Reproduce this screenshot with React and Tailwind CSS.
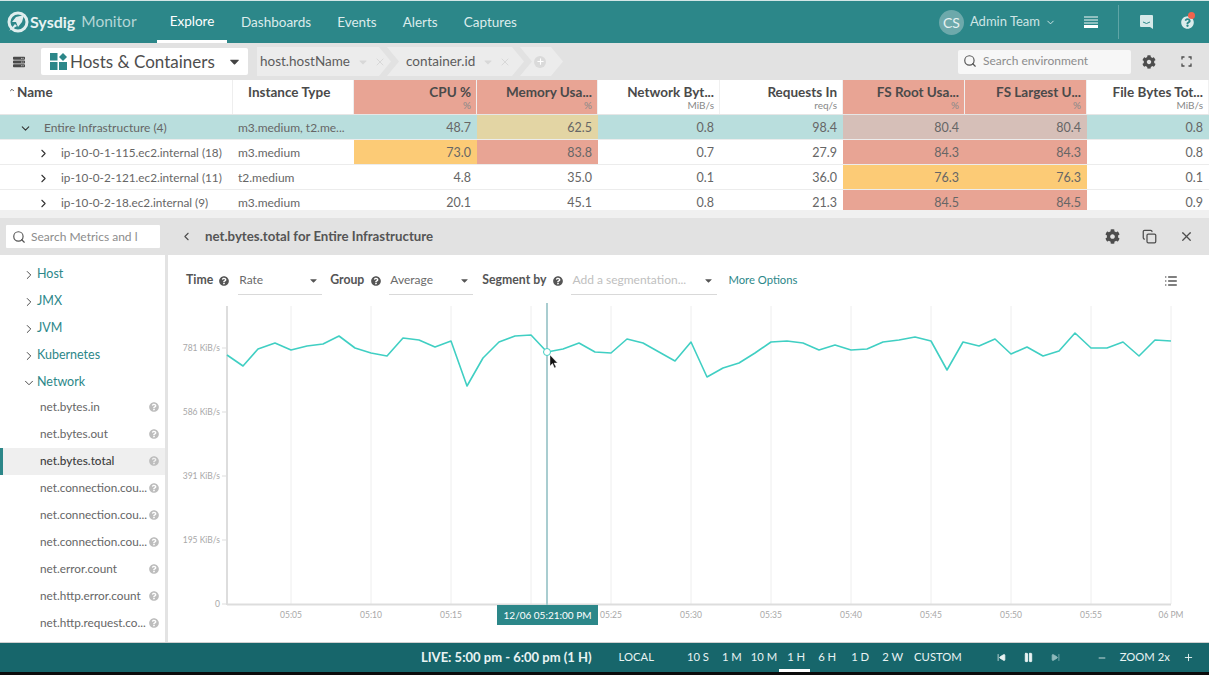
import React from "react";
import { Search, ChevronDown, ChevronRight, ChevronLeft, ChevronUp, X, Copy, List, SkipBack, SkipForward, Pause, Plus, Minus } from "lucide-react";
import { FaCog, FaQuestionCircle, FaCaretDown, FaServer } from "react-icons/fa";

const cols = [
  { w: "w-[233px]" }, { w: "w-[121px]" }, { w: "w-[123px]" }, { w: "w-[121px]" },
  { w: "w-[122px]" }, { w: "w-[123px]" }, { w: "w-[122px]" }, { w: "w-[122px]" }, { w: "w-[122px]" },
];
const headers = [
  ["CPU %", "%", "bg-[#e8a494]"], ["Memory Usa...", "%", "bg-[#e8a494]"], ["Network Byt...", "MiB/s", ""],
  ["Requests In", "req/s", ""], ["FS Root Usa...", "%", "bg-[#e8a494]"], ["FS Largest U...", "%", "bg-[#e8a494]"], ["File Bytes Tot...", "MiB/s", ""],
];
const R = "bg-[#e8a494]", O = "bg-[#fccb76]";
const rows = [
  { name: "Entire Infrastructure (4)", indent: "pl-[19px] text-[12px]", gap: "ml-[12px]", open: true, type: "m3.medium, t2.me...", row: "bg-[#b9dedd]", vals: [["48.7", ""], ["62.5", "bg-[#e3d5a4]"], ["0.8", ""], ["98.4", ""], ["80.4", "bg-[#d6bfb8]"], ["80.4", "bg-[#d6bfb8]"], ["0.8", ""]] },
  { name: "ip-10-0-1-115.ec2.internal (18)", indent: "pl-[37px] text-[11.75px]", gap: "ml-[11px]", type: "m3.medium", row: "", vals: [["73.0", O], ["83.8", R], ["0.7", ""], ["27.9", ""], ["84.3", R], ["84.3", R], ["0.8", ""]] },
  { name: "ip-10-0-2-121.ec2.internal (11)", indent: "pl-[37px] text-[11.75px]", gap: "ml-[11px]", type: "t2.medium", row: "", vals: [["4.8", ""], ["35.0", ""], ["0.1", ""], ["36.0", ""], ["76.3", O], ["76.3", O], ["0.1", ""]] },
  { name: "ip-10-0-2-18.ec2.internal (9)", indent: "pl-[37px] text-[11.75px]", gap: "ml-[11px]", type: "m3.medium", row: "", vals: [["20.1", ""], ["45.1", ""], ["0.8", ""], ["21.3", ""], ["84.5", R], ["84.5", R], ["0.9", ""]] },
];
const metrics = ["net.bytes.in", "net.bytes.out", "net.bytes.total", "net.connection.cou...", "net.connection.cou...", "net.connection.cou...", "net.error.count", "net.http.error.count", "net.http.request.co..."];
const points = "227,354 243,365 258,348 275,342 291,349 307,345 323,343 339,335 355,347 371,352 387,355 403,337 419,339 435,346 451,340 467,385 483,357 499,341 515,335 531,334 547,351 563,348 579,342 595,351 611,352 627,338 643,342 659,351 675,360 691,341 707,376 723,367 739,362 755,352 771,341 787,340 803,342 819,349 835,344 851,349 867,348 883,341 899,339 915,336 931,340 947,369 963,341 979,345 995,338 1011,353 1027,346 1043,355 1059,350 1075,332 1091,347 1107,347 1123,341 1139,355 1155,339 1171,340";
const grid = [291, 371, 451, 531, 611, 691, 771, 851, 931, 1011, 1091, 1171];
const ticks = [[291, "05:05"], [371, "05:10"], [451, "05:15"], [611, "05:25"], [691, "05:30"], [771, "05:35"], [851, "05:40"], [931, "05:45"], [1011, "05:50"], [1091, "05:55"], [1171, "06 PM"]];
const ylabels = [[347, "781 KiB/s"], [411, "586 KiB/s"], [475, "391 KiB/s"], [539, "195 KiB/s"], [603, "0"]];

function Logo() {
  return (
    <svg width="22" height="22" viewBox="0 0 22 22" className="shrink-0">
      <circle cx="11" cy="11" r="9" fill="none" stroke="#dfeeee" strokeWidth="3" />
      <path d="M17 4 L9 6 L5 11 L9 11 L11 16 L15 11 Z" fill="#dfeeee" />
      <path d="M2 20 L8 13 L10 15 Z" fill="#dfeeee" />
    </svg>
  );
}

function GridLogo() {
  return (
    <svg width="17" height="17" viewBox="0 0 17 17" className="shrink-0">
      <rect x="0" y="0" width="7.5" height="7.5" fill="#2c8789" />
      <rect x="0" y="9" width="7.5" height="8" fill="#2c8789" />
      <rect x="9" y="9" width="8" height="8" fill="#2c8789" />
      <path d="M13 0 L17 4 L13 8 L9 4 Z" fill="#2c8789" />
    </svg>
  );
}

function Crumb({ label, className }) {
  return (
    <div className={`flex h-[29px] items-center bg-[#ececec] ${className}`}>
      <span className="text-[13.5px] text-[#5c5c5c]">{label}</span>
      <FaCaretDown className="ml-[7px] shrink-0 text-[#d8d8d8]" size={12} />
      <X className="ml-[5px] shrink-0 text-[#d8d8d8]" size={12} />
    </div>
  );
}

function Select({ label, width, muted }) {
  return (
    <div className={`flex h-[29px] ${width} items-center justify-between border-b border-[#d9d9d9] pl-[1px] pr-[3px]`}>
      <span className={`text-[12px] ${muted ? "text-[#c0c0c0]" : "text-[#6a6a6a]"}`}>{label}</span>
      <FaCaretDown className="text-[#555]" size={11} />
    </div>
  );
}

function Group({ name, open }) {
  const Icon = open ? ChevronDown : ChevronRight;
  return (
    <div className="flex h-[27px] items-center pl-[22px] pt-[4px]">
      <Icon size={14} className="shrink-0 text-[#3f3f3f]" strokeWidth={1.6} />
      <span className="ml-[1px] text-[12.5px] text-[#2c8789]">{name}</span>
    </div>
  );
}

export default function App() {
  return (
    <div className="flex h-[675px] w-[1209px] flex-col overflow-hidden bg-white font-['Lato',sans-serif]">
      <header className="flex h-[43px] shrink-0 items-center border-t border-[#d3e6e6] bg-[#2c8789] text-[13.5px]">
        <div className="ml-[7px] flex w-[150px] items-center">
          <Logo />
          <span className="ml-[1px] text-[16px] font-bold text-[#e8f3f3]">Sysdig</span>
          <span className="ml-[6px] text-[15.5px] text-[#b5d6d6]">Monitor</span>
        </div>
        <nav className="flex h-full items-stretch text-[#dcecec]">
          <div className="flex w-[70px] items-center justify-center border-b-[3px] border-white pt-[1px] text-white">Explore</div>
          <div className="ml-[14px] flex items-center">Dashboards</div>
          <div className="ml-[26px] flex items-center">Events</div>
          <div className="ml-[26px] flex items-center">Alerts</div>
          <div className="ml-[26px] flex items-center">Captures</div>
        </nav>
        <div className="ml-auto flex h-full items-center">
          <div className="flex h-[25px] w-[25px] items-center justify-center rounded-full bg-[#6da9ab] text-[14px] text-[#e6f2f2]">CS</div>
          <span className="ml-[6px] text-[13px] text-[#cfe5e5]">Admin Team</span>
          <ChevronDown size={11} className="ml-[5px] text-[#dcecec]" />
          <div className="ml-[28px] flex w-[14px] flex-col gap-[1px]">
            <div className="h-[2px] bg-[#8fc0c0]" />
            <div className="h-[2px] bg-[#8fc0c0]" />
            <div className="h-[2px] bg-[#8fc0c0]" />
            <div className="h-[3px] bg-white" />
          </div>
          <div className="ml-[20px] h-[34px] w-px bg-[#5fa5a6]" />
          <svg width="15" height="16" viewBox="0 0 15 16" className="ml-[20px]">
            <path d="M2 1 H13 a1 1 0 0 1 1 1 V15 L11 13 H2 a1 1 0 0 1 -1 -1 V2 a1 1 0 0 1 1 -1 Z" fill="#d6e9e9" />
            <path d="M4 8 Q7.5 11 11 8" stroke="#2c8789" fill="none" strokeWidth="1" />
          </svg>
          <div className="relative ml-[27px] mr-[15px]">
            <FaQuestionCircle size={13} className="text-[#dcecec]" />
            <div className="absolute right-[-1px] top-[-4px] h-[7px] w-[7px] rounded-full bg-[#f0644e]" />
          </div>
        </div>
      </header>

      <div className="flex h-[37px] shrink-0 items-center bg-[#e2e2e2]">
        <FaServer size={12} className="ml-[13px] text-[#4a4a4a]" />
        <div className="ml-[16px] flex h-[27px] w-[207px] items-center rounded-[2px] bg-white pl-[9px]">
          <GridLogo />
          <span className="ml-[3px] text-[17px] text-[#4e4e4e]">Hosts &amp; Containers</span>
          <FaCaretDown size={15} className="ml-[12px] text-[#444]" />
        </div>
        <div className="ml-[9px] flex items-center">
          <Crumb label="host.hostName" className="w-[134px] pl-[3px] [clip-path:polygon(0_0,calc(100%-12px)_0,100%_50%,calc(100%-12px)_100%,0_100%)]" />
          <Crumb label="container.id" className="ml-[-4px] w-[137px] pl-[19px] [clip-path:polygon(0_0,calc(100%-12px)_0,100%_50%,calc(100%-12px)_100%,0_100%,12px_50%)]" />
          <div className="ml-[-4px] flex h-[29px] w-[43px] items-center bg-[#ececec] pl-[14px] [clip-path:polygon(0_0,calc(100%-12px)_0,100%_50%,calc(100%-12px)_100%,0_100%,12px_50%)]">
            <div className="flex h-[12px] w-[12px] items-center justify-center rounded-full bg-[#dadada]"><Plus size={9} className="text-white" strokeWidth={3} /></div>
          </div>
        </div>
        <div className="ml-auto flex h-[24px] w-[173px] items-center rounded-[2px] bg-[#f7f7f7] pb-[1px] pl-[5px]">
          <Search size={14} className="text-[#555]" />
          <span className="ml-[6px] text-[12px] text-[#8c8c8c]">Search environment</span>
        </div>
        <FaCog size={14} className="ml-[11px] text-[#4d4d4d]" />
        <svg width="11" height="11" viewBox="0 0 11 11" className="ml-[25px] mr-[17px]" fill="none" stroke="#4d4d4d" strokeWidth="1.3">
          <path d="M1 3.5 V1 H3.5 M7.5 1 H10 V3.5 M10 7.5 V10 H7.5 M3.5 10 H1 V7.5" />
        </svg>
      </div>

      <div className="flex h-[35px] shrink-0 border-b border-[#e6e6e6]">
        <div className={`${cols[0].w} flex items-start border-r border-[#eeeeee] pl-[9px] pt-[2px]`}>
          <ChevronUp size={6} className="mt-[5px] text-[#555]" strokeWidth={4} />
          <span className="ml-[2px] text-[13.5px] font-bold text-[#4a4a4a]">Name</span>
        </div>
        <div className={`${cols[1].w} border-r border-[#eeeeee] pl-[15px] pt-[2px] text-[13.5px] font-bold text-[#4a4a4a]`}>Instance Type</div>
        {headers.map(([t, u, c], i) => (
          <div key={i} className={`${cols[i + 2].w} ${c} flex flex-col items-end border-r border-[#f0f0f0] pr-[5px] pt-[5px]`}>
            <span className="text-[13.5px] leading-[15px] font-bold whitespace-nowrap text-[#4a4a4a]">{t}</span>
            <span className="text-[10px] leading-[11px] text-[#888]">{u}</span>
          </div>
        ))}
      </div>

      <div className="h-[95px] shrink-0 overflow-hidden">
        {rows.map((r, i) => (
          <div key={i} className={`flex h-[25px] border-b border-[#ececec] text-[#666] ${r.row}`}>
            <div className={`${cols[0].w} flex items-center pt-[2px] ${r.indent}`}>
              {r.open ? <ChevronDown size={13} className="shrink-0 text-[#333]" strokeWidth={2} /> : <ChevronRight size={13} className="shrink-0 text-[#333]" strokeWidth={2} />}
              <span className={`${r.gap} whitespace-nowrap`}>{r.name}</span>
            </div>
            <div className={`${cols[1].w} flex items-center whitespace-nowrap pl-[5px] pt-[2px] text-[12px]`}>{r.type}</div>
            {r.vals.map(([v, c], j) => (
              <div key={j} className={`${cols[j + 2].w} ${c} flex items-center justify-end pr-[6px] pt-[2px] text-[12.5px]`}>{v}</div>
            ))}
          </div>
        ))}
      </div>

      <div className="h-[8px] shrink-0 bg-[#f0f0f0]" />

      <div className="flex h-[37px] shrink-0 items-center bg-[#e2e2e2]">
        <div className="ml-[6px] flex h-[23px] w-[154px] items-center rounded-[1px] bg-white pl-[6px]">
          <Search size={14} className="text-[#555]" />
          <span className="ml-[5px] text-[12px] text-[#8c8c8c]">Search Metrics and l</span>
        </div>
        <ChevronLeft size={13} className="ml-[20px] text-[#4d4d4d]" strokeWidth={2} />
        <span className="ml-[12px] text-[13.25px] font-bold text-[#555]">net.bytes.total for Entire Infrastructure</span>
        <FaCog size={15} className="ml-auto text-[#4d4d4d]" />
        <Copy size={15} className="ml-[22px] text-[#4d4d4d]" />
        <X size={15} className="ml-[22px] mr-[15px] text-[#4d4d4d]" />
      </div>

      <div className="flex min-h-0 flex-1">
        <aside className="w-[168px] shrink-0 border-r-[3px] border-[#e3e3e3] pt-[4px]">
          <Group name="Host" />
          <Group name="JMX" />
          <Group name="JVM" />
          <Group name="Kubernetes" />
          <Group name="Network" open />
          {metrics.map((m, i) => (
            <div key={i} className={`flex h-[27px] items-center justify-between pb-[2px] pr-[6px] text-[11.75px] ${m === "net.bytes.total" ? "border-l-[3px] border-[#2c8789] bg-[#efefef] pl-[37px] font-medium text-[#3d3d3d]" : "pl-[40px] text-[#666]"}`}>
              <span className="whitespace-nowrap">{m}</span>
              <FaQuestionCircle size={10} className="shrink-0 text-[#bdbdbd]" />
            </div>
          ))}
        </aside>

        <main className="relative min-w-0 flex-1">
          <div className="box-content flex h-[29px] items-center pl-[18px] pt-[11px]">
            <span className="text-[12.25px] font-bold text-[#555]">Time</span>
            <FaQuestionCircle size={10} className="ml-[6px] text-[#555]" />
            <div className="ml-[9px]"><Select label="Rate" width="w-[84px]" /></div>
            <span className="ml-[8px] text-[12.25px] font-bold text-[#555]">Group</span>
            <FaQuestionCircle size={10} className="ml-[7px] text-[#555]" />
            <div className="ml-[8px]"><Select label="Average" width="w-[84px]" /></div>
            <span className="ml-[9px] text-[12.25px] font-bold text-[#555]">Segment by</span>
            <FaQuestionCircle size={10} className="ml-[7px] text-[#555]" />
            <div className="ml-[8px]"><Select label="Add a segmentation..." width="w-[146px]" muted /></div>
            <span className="ml-[11px] text-[11.25px] text-[#2c8789]">More Options</span>
            <List size={14} className="ml-auto mr-[31px] text-[#555]" strokeWidth={2.5} />
          </div>
          <svg width="1041" height="335" viewBox="168 295 1041 335" className="mt-[1px] block">
            {grid.map((x) => <line key={x} x1={x} x2={x} y1="305" y2="603" stroke="#eeeeee" />)}
            <line x1="227" x2="227" y1="305" y2="604" stroke="#dddddd" strokeWidth="2" />
            <line x1="227" x2="1171" y1="603.5" y2="603.5" stroke="#dddddd" strokeWidth="2" />
            {ylabels.map(([y, t]) => (
              <g key={t}>
                <line x1="222" x2="226" y1={y} y2={y} stroke="#dddddd" />
                <text x="220" y={y + 3} textAnchor="end" fontSize="8.5" fill="#a8a8a8" fontFamily="Lato">{t}</text>
              </g>
            ))}
            {ticks.map(([x, t]) => <text key={t} x={x} y="617" textAnchor="middle" fontSize="8.5" fill="#a8a8a8" fontFamily="Lato">{t}</text>)}
            <polyline points={points} fill="none" stroke="#40cfc3" strokeWidth="1.6" strokeLinejoin="round" />
            <line x1="547" x2="547" y1="302" y2="604" stroke="#a9cdd0" strokeWidth="2" />
            <circle cx="547" cy="351" r="3.5" fill="#fff" stroke="#40cfc3" strokeWidth="1" />
            <path d="M550 354 V365 L552.5 362.5 L554.5 367 L556 366 L554 362 L557.5 362 Z" fill="#111" stroke="#fff" strokeWidth="0.4" />
          </svg>
          <div className="absolute left-[329px] top-[350px] flex h-[20px] w-[101px] items-center justify-center bg-[#2c8789] text-[10px] text-white">12/06 05:21:00 PM</div>
        </main>
      </div>

      <footer className="flex h-[30px] shrink-0 items-center border-t border-[#d0d0d0] bg-[#17666b] text-[11.25px] text-[#e9f3f3]">
        <span className="ml-[421px] text-[13px] font-bold">LIVE: 5:00 pm - 6:00 pm (1 H)</span>
        <span className="ml-[27px]">LOCAL</span>
        <span className="ml-[33px]">10 S</span>
        <span className="ml-[13px]">1 M</span>
        <span className="ml-[9px]">10 M</span>
        <div className="relative ml-[10px] flex h-full items-center">
          1 H
          <div className="absolute bottom-0 left-[-8px] h-[3px] w-[31px] bg-white" />
        </div>
        <span className="ml-[13px]">6 H</span>
        <span className="ml-[15px]">1 D</span>
        <span className="ml-[13px]">2 W</span>
        <span className="ml-[11px]">CUSTOM</span>
        <SkipBack size={9} className="ml-[35px] shrink-0 fill-[#e9f3f3]" />
        <Pause size={11} className="ml-[17px] shrink-0 fill-[#e9f3f3]" />
        <SkipForward size={9} className="ml-[17px] shrink-0 fill-[#8db9bb] text-[#8db9bb]" />
        <Minus size={10} className="ml-[37px] shrink-0" />
        <span className="ml-[13px]">ZOOM 2x</span>
        <Plus size={11} className="ml-[13px] shrink-0" />
      </footer>
      <div className="h-[3px] shrink-0 bg-[#0c0c0c]" />
    </div>
  );
}
